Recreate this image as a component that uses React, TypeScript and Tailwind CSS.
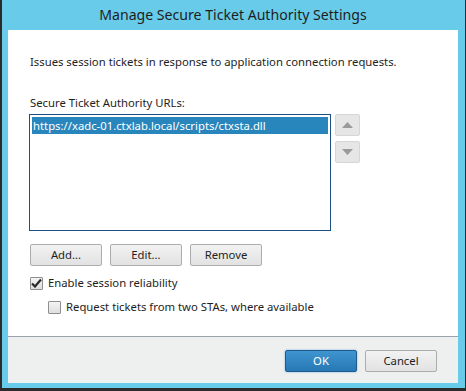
import React from "react";

const font = { fontFamily: '"Noto Sans", "Open Sans", sans-serif' };

function Btn({ children, w = "w-[72px]" }: { children: React.ReactNode; w?: string }) {
  return (
    <div
      className={`${w} h-[22px] flex items-center justify-center rounded-[2px] border border-[#acacac] bg-gradient-to-b from-[#f2f2f2] to-[#e2e2e2] text-[11.3px] text-[#1e1e1e]`}
    >
      {children}
    </div>
  );
}

function Arrow({ up }: { up?: boolean }) {
  return (
    <div className="w-[25px] h-[22px] flex items-center justify-center rounded-[2px] border border-[#d6d6d6] bg-[#e6e6e6]">
      <svg width="11" height="6" viewBox="0 0 11 6">
        {up ? <polygon points="0,6 11,6 5.5,0" fill="#9a9a9a" /> : <polygon points="0,0 11,0 5.5,6" fill="#9a9a9a" />}
      </svg>
    </div>
  );
}

function Check({ checked }: { checked?: boolean }) {
  return (
    <div className="w-[13px] h-[13px] border border-[#8e8f8f] rounded-[1px] bg-gradient-to-b from-[#f4f4f4] to-[#dedede] flex items-center justify-center">
      {checked && (
        <svg width="11" height="10" viewBox="0 0 11 10">
          <path d="M1 5.5 L4 8.5 L10 1.5" stroke="#2a2a2a" strokeWidth="2.2" fill="none" />
        </svg>
      )}
    </div>
  );
}

export default function App() {
  return (
    <div className="w-[466px] h-[391px] bg-[#2b2b2b] pl-[2px] pr-[1px] pb-[3px]" style={font}>
      <div className="w-full h-full bg-[#68cbea] flex flex-col pl-[6px] pr-[7px] pb-[5px]">
        <div className="h-[30px] flex items-center justify-center text-[14.1px] text-[#1e1e1e]">
          Manage Secure Ticket Authority Settings
        </div>
        <div className="flex-1 bg-white flex flex-col pl-[22px] text-[11.3px] text-[#1e1e1e]">
          <div className="mt-[24px] leading-[16px]">Issues session tickets in response to application connection requests.</div>
          <div className="mt-[25px] leading-[16px]">Secure Ticket Authority URLs:</div>
          <div className="flex mt-[3px] -ml-[1px]">
            <div className="w-[302px] h-[117px] border-[1.5px] border-[#1b4f86] p-[2px]">
              <div className="h-[17px] bg-[#2986bc] text-white leading-[17px] pl-[1px]">
                https://xadc-01.ctxlab.local/scripts/ctxsta.dll
              </div>
            </div>
            <div className="ml-[4px] flex flex-col gap-[5px]">
              <Arrow up />
              <Arrow />
            </div>
          </div>
          <div className="flex gap-[8px] mt-[13px]">
            <Btn>Add...</Btn>
            <Btn>Edit...</Btn>
            <Btn>Remove</Btn>
          </div>
          <div className="flex items-center gap-[5px] mt-[9px]">
            <Check checked />
            <span>Enable session reliability</span>
          </div>
          <div className="flex items-center gap-[5px] mt-[7px] ml-[18px]">
            <Check />
            <span>Request tickets from two STAs, where available</span>
          </div>
        </div>
        <div className="h-[47px] border-t border-[#9aa3ad] bg-[#eeefef] flex items-center justify-end pr-[21px] gap-[8px] pt-[2px]">
          <div className="w-[72px] h-[22px] flex items-center justify-center rounded-[2px] border border-[#1c5a8f] bg-gradient-to-b from-[#3f95cf] to-[#2778b5] text-white text-[11.3px] shadow-[0_0_2px_#6fb0e0]">
            OK
          </div>
          <Btn>Cancel</Btn>
        </div>
      </div>
    </div>
  );
}
